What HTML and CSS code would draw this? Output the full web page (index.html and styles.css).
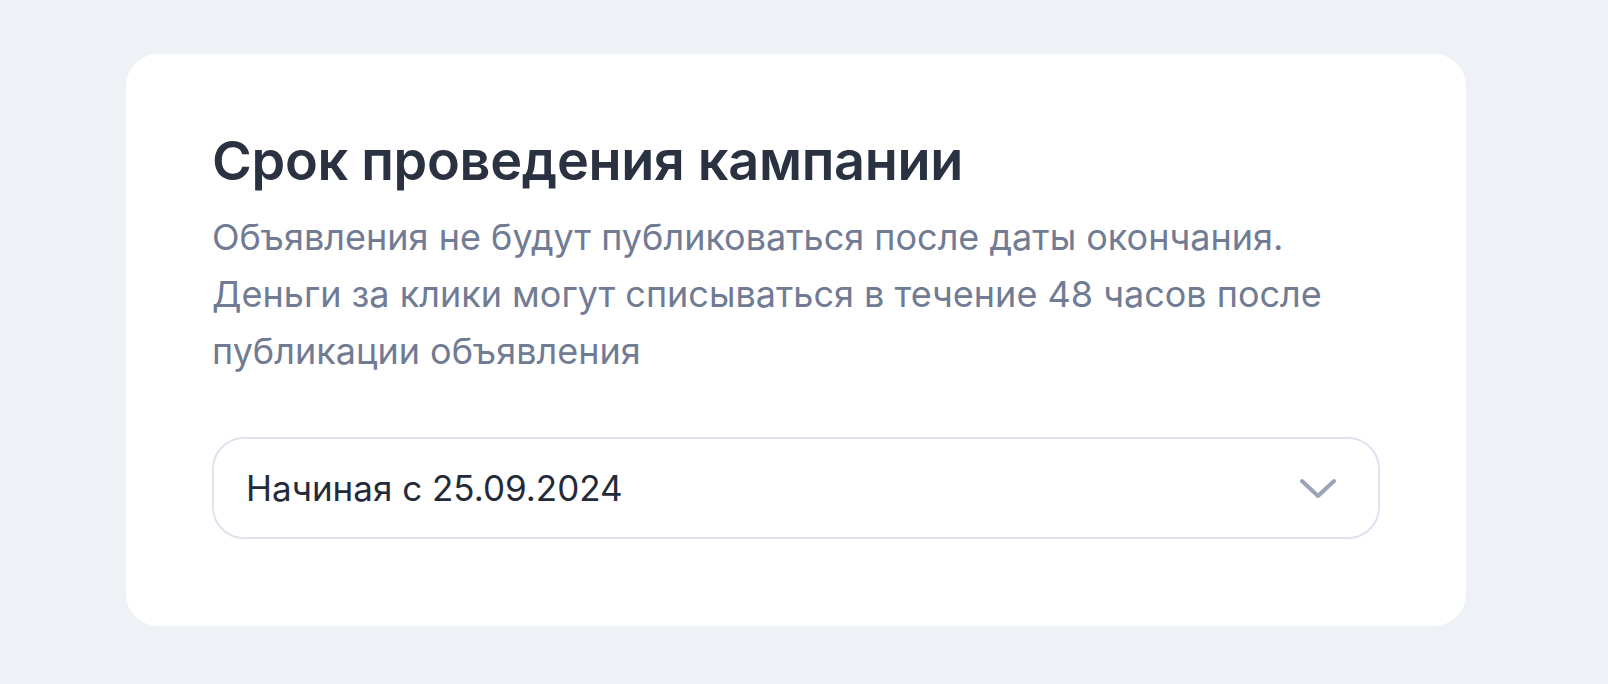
FILE: index.html
```html
<!DOCTYPE html>
<html lang="ru">
<head>
  <meta charset="UTF-8">
  <meta name="viewport" content="width=device-width, initial-scale=1.0">
  <title>Срок проведения кампании</title>
  <link rel="stylesheet" href="styles.css">
</head>
<body>

  <!-- Campaign period card -->
  <section class="card">
    <h2 class="card-title">Срок проведения кампании</h2>
    <p class="card-text">Объявления не будут публиковаться после даты окончания.<br>Деньги за клики могут списываться в течение 48 часов после публикации объявления</p>

    <div class="select">
      <span class="select-value">Начиная с 25.09.2024</span>
      <svg class="select-arrow" width="40" height="24" viewBox="0 0 40 24">
        <path d="M4 5 L20 20 L36 5" fill="none" stroke="#9ba4b6" stroke-width="4" stroke-linecap="round" stroke-linejoin="round"/>
      </svg>
    </div>
  </section>

</body>
</html>
```

FILE: styles.css
```css
body { margin: 0; padding: 54px 0 0 126px; background-color: #eef1f6; font-family: Inter, "Noto Sans", sans-serif; }
.card { box-sizing: border-box; width: 1340px; padding: 75px 86px 87px 86px; background-color: #fff; border-radius: 32px; }
.card-title { margin: 0; font-size: 54px; line-height: 64px; font-weight: 600; color: #2a3242; letter-spacing: -0.3px; }
.card-text { margin: 16px 0 0 0; font-size: 36px; line-height: 57px; color: #717b93; }
.select { box-sizing: border-box; display: flex; align-items: center; justify-content: space-between; height: 102px; margin-top: 57px; padding: 0 40px 0 32px; border: 2px solid #dfe1ee; border-radius: 32px; }
.select-value { font-size: 35px; color: #232b3a; }
.select-arrow { display: block; }
```
